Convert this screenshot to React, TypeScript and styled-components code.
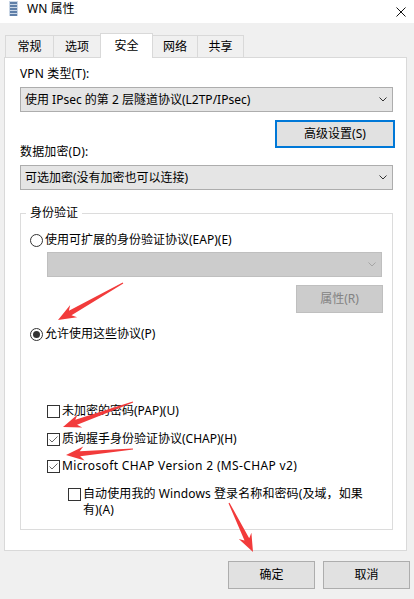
import styled, { createGlobalStyle } from "styled-components";
import { ReactElement, ReactNode } from "react";

const GlobalStyle = createGlobalStyle`
  html, body {
    margin: 0;
    padding: 0;
    background: #f0f0f0;
  }
  body {
    font-family: "Noto Sans", "Noto Sans CJK SC", sans-serif;
    font-size: 12px;
    color: #000;
  }
`;

const Window = styled.div`
  position: relative;
  width: 414px;
  height: 599px;
  overflow: hidden;
  display: flex;
  flex-direction: column;
  background: #f0f0f0;
`;

const TitleBar = styled.div`
  height: 23px;
  flex: none;
  box-sizing: border-box;
  background: #fff;
  display: flex;
  align-items: flex-start;
  padding: 1px 0 0 9px;
`;

const TitleText = styled.span`
  margin-left: 9px;
  line-height: 16px;
`;

const CloseBox = styled.div`
  margin: 3px 8px 0 auto;
  width: 10px;
  height: 10px;
`;

const TabStrip = styled.div`
  flex: none;
  display: flex;
  align-items: flex-end;
  height: 24px;
  margin-top: 10px;
  padding-left: 5px;
  position: relative;
  z-index: 1;
`;

const Tab = styled.div<{ $active?: boolean; $w: number }>`
  width: ${(p) => p.$w}px;
  height: ${(p) => (p.$active ? 25 : 22)}px;
  margin-bottom: ${(p) => (p.$active ? -1 : 0)}px;
  box-sizing: border-box;
  border: 1px solid #d9d9d9;
  border-bottom: none;
  background: ${(p) => (p.$active ? "#fff" : "#f0f0f0")};
  position: relative;
  z-index: ${(p) => (p.$active ? 2 : 1)};
  display: flex;
  align-items: center;
  justify-content: center;
  line-height: 16px;

  & + & {
    margin-left: -1px;
  }
`;

const Panel = styled.div`
  flex: none;
  margin-left: 4px;
  width: 403px;
  height: 494px;
  box-sizing: border-box;
  border: 1px solid #d9d9d9;
  background: #fff;
  padding: 8px 13px 0 15px;
  display: flex;
  flex-direction: column;
`;

const Label = styled.div<{ $mt?: number }>`
  line-height: 16px;
  margin-top: ${(p) => p.$mt ?? 0}px;
  letter-spacing: 0.15px;
`;

const Combo = styled.div<{ $disabled?: boolean; $mt?: number; $ml?: number }>`
  height: 25px;
  box-sizing: border-box;
  margin-top: ${(p) => p.$mt ?? 0}px;
  margin-left: ${(p) => p.$ml ?? 0}px;
  border: 1px solid ${(p) => (p.$disabled ? "#bfbfbf" : "#adadad")};
  background: ${(p) => (p.$disabled ? "#cccccc" : "#e5e5e5")};
  display: flex;
  align-items: center;
  padding: 0 5px 0 4px;
  line-height: 16px;
  white-space: nowrap;
`;

const Chevron = styled.svg`
  margin-left: auto;
  flex: none;
`;

const ButtonRow = styled.div<{ $mt?: number; $mr?: number }>`
  display: flex;
  justify-content: flex-end;
  margin-top: ${(p) => p.$mt ?? 0}px;
  margin-right: ${(p) => p.$mr ?? 0}px;
`;

const Button = styled.div<{ $w: number; $focused?: boolean; $disabled?: boolean }>`
  width: ${(p) => p.$w}px;
  height: 28px;
  box-sizing: border-box;
  border: ${(p) =>
    p.$focused ? "2px solid #0078d7" : p.$disabled ? "1px solid #bfbfbf" : "1px solid #adadad"};
  background: ${(p) => (p.$disabled ? "#cccccc" : "#e1e1e1")};
  color: ${(p) => (p.$disabled ? "#838383" : "#000")};
  display: flex;
  align-items: center;
  justify-content: center;
  line-height: 16px;
`;

const GroupBox = styled.fieldset`
  margin: 15px 0 0;
  padding: 0 10px 11px 9px;
  border: 1px solid #dcdcdc;
  min-width: 0;
  box-sizing: border-box;
  display: flex;
  flex-direction: column;
`;

const Legend = styled.legend`
  padding: 0 4px;
  margin-left: -4px;
  line-height: 16px;
`;

const Option = styled.div<{ $mt?: number; $ml?: number; $ls?: number }>`
  display: flex;
  align-items: flex-start;
  gap: 2px;
  line-height: 16px;
  margin-top: ${(p) => p.$mt ?? 0}px;
  margin-left: ${(p) => p.$ml ?? 0}px;
  letter-spacing: ${(p) => p.$ls ?? 0}px;
`;

const Mark = styled.svg`
  flex: none;
  margin-top: 2px;
`;

const Footer = styled.div`
  flex: none;
  display: flex;
  justify-content: flex-end;
  gap: 8px;
  margin-top: 10px;
  padding-right: 4px;
`;

const Overlay = styled.svg`
  position: absolute;
  left: 0;
  top: 0;
  pointer-events: none;
  z-index: 5;
`;

const Radio = ({ checked }: { checked?: boolean }): ReactElement => (
  <Mark width="13" height="13" viewBox="0 0 13 13">
    <circle cx="6.5" cy="6.5" r="6" fill="#fff" stroke="#333" strokeWidth="1" />
    {checked && <circle cx="6.5" cy="6.5" r="3.5" fill="#333" />}
  </Mark>
);

const Check = ({ checked }: { checked?: boolean }): ReactElement => (
  <Mark width="13" height="13" viewBox="0 0 13 13">
    <rect x="0.5" y="0.5" width="12" height="12" fill="#fff" stroke="#333" strokeWidth="1" />
    {checked && (
      <polyline points="2.5,6.5 5,9 10.5,3.5" fill="none" stroke="#666" strokeWidth="1" />
    )}
  </Mark>
);

const ChevronDown = ({ disabled }: { disabled?: boolean }): ReactElement => (
  <Chevron width="8" height="5" viewBox="0 0 8 5">
    <polyline points="0.5,0.5 4,4 7.5,0.5" fill="none" stroke={disabled ? "#a5a5a5" : "#333"} strokeWidth="1" />
  </Chevron>
);

const Row = ({
  mark,
  mt,
  ml,
  ls,
  children,
}: {
  mark: ReactNode;
  mt?: number;
  ml?: number;
  ls?: number;
  children: ReactNode;
}): ReactElement => (
  <Option $mt={mt} $ml={ml} $ls={ls}>
    {mark}
    <span>{children}</span>
  </Option>
);

// red annotation arrow from tail to tip
const arrowPoints = (tx: number, ty: number, hx: number, hy: number): string => {
  const dx = hx - tx;
  const dy = hy - ty;
  const len = Math.hypot(dx, dy);
  const ux = dx / len;
  const uy = dy / len;
  const nx = -uy;
  const ny = ux;
  const head = Math.min(18, len * 0.4);
  const bx = hx - ux * head;
  const by = hy - uy * head;
  const nx2 = hx - ux * (head - 4);
  const ny2 = hy - uy * (head - 4);
  const p = (x: number, y: number) => `${x.toFixed(1)},${y.toFixed(1)}`;
  return [
    p(tx + nx * 0.6, ty + ny * 0.6),
    p(nx2 + nx * 2.6, ny2 + ny * 2.6),
    p(bx + nx * 7, by + ny * 7),
    p(hx, hy),
    p(bx - nx * 7, by - ny * 7),
    p(nx2 - nx * 2.6, ny2 - ny * 2.6),
    p(tx - nx * 0.6, ty - ny * 0.6),
  ].join(" ");
};

const arrows: [number, number, number, number][] = [
  [123, 283, 58, 320],
  [133, 402, 63, 427],
  [133, 449, 66, 455],
  [229, 503, 253, 552],
];

const tabs = [
  { label: "常规", w: 49 },
  { label: "选项", w: 48 },
  { label: "安全", w: 53, active: true },
  { label: "网络", w: 46 },
  { label: "共享", w: 47 },
];

export default function App(): ReactElement {
  return (
    <Window>
      <GlobalStyle />
      <TitleBar>
        <svg width="9" height="15" viewBox="0 0 9 15">
          <rect x="0" y="0" width="9" height="15" fill="#c9d6e6" />
          {[1, 4, 7, 10, 13].map((y) => (
            <rect key={y} x="1" y={y} width="7" height="2" fill="#5f7fa8" />
          ))}
        </svg>
        <TitleText>WN 属性</TitleText>
        <CloseBox>
          <svg width="10" height="10" viewBox="0 0 10 10">
            <path d="M0.5 0.5 L9.5 9.5 M9.5 0.5 L0.5 9.5" stroke="#111" strokeWidth="1" />
          </svg>
        </CloseBox>
      </TitleBar>

      <TabStrip>
        {tabs.map((t) => (
          <Tab key={t.label} $w={t.w} $active={t.active}>
            {t.label}
          </Tab>
        ))}
      </TabStrip>

      <Panel>
        <Label>VPN 类型(T):</Label>
        <Combo $mt={5}>
          使用 IPsec 的第 2 层隧道协议(L2TP/IPsec)
          <ChevronDown />
        </Combo>
        <ButtonRow $mt={8} $mr={-2}>
          <Button $w={120} $focused>
            高级设置(S)
          </Button>
        </ButtonRow>
        <Label $mt={-4}>数据加密(D):</Label>
        <Combo $mt={5}>
          可选加密(没有加密也可以连接)
          <ChevronDown />
        </Combo>

        <GroupBox>
          <Legend>身份验证</Legend>
          <Row mark={<Radio />} mt={11}>
            使用可扩展的身份验证协议(EAP)(E)
          </Row>
          <Combo $disabled $mt={4} $ml={17}>
            <ChevronDown disabled />
          </Combo>
          <ButtonRow $mt={8} $mr={-1}>
            <Button $w={87} $disabled>
              属性(R)
            </Button>
          </ButtonRow>
          <Row mark={<Radio checked />} mt={13}>
            允许使用这些协议(P)
          </Row>
          <Row mark={<Check />} mt={61} ml={17}>
            未加密的密码(PAP)(U)
          </Row>
          <Row mark={<Check checked />} mt={12} ml={17}>
            质询握手身份验证协议(CHAP)(H)
          </Row>
          <Row mark={<Check checked />} mt={11} ml={17} ls={0.35}>
            Microsoft CHAP Version 2 (MS-CHAP v2)
          </Row>
          <Row mark={<Check />} mt={12} ml={38} ls={0.1}>
            自动使用我的 Windows 登录名称和密码(及域，如果
            <br />
            有)(A)
          </Row>
        </GroupBox>
      </Panel>

      <Footer>
        <Button $w={87}>确定</Button>
        <Button $w={87}>取消</Button>
      </Footer>

      <Overlay width="414" height="599" viewBox="0 0 414 599">
        {arrows.map((a, i) => (
          <polygon key={i} points={arrowPoints(a[0], a[1], a[2], a[3])} fill="#f23b3b" />
        ))}
      </Overlay>
    </Window>
  );
}
